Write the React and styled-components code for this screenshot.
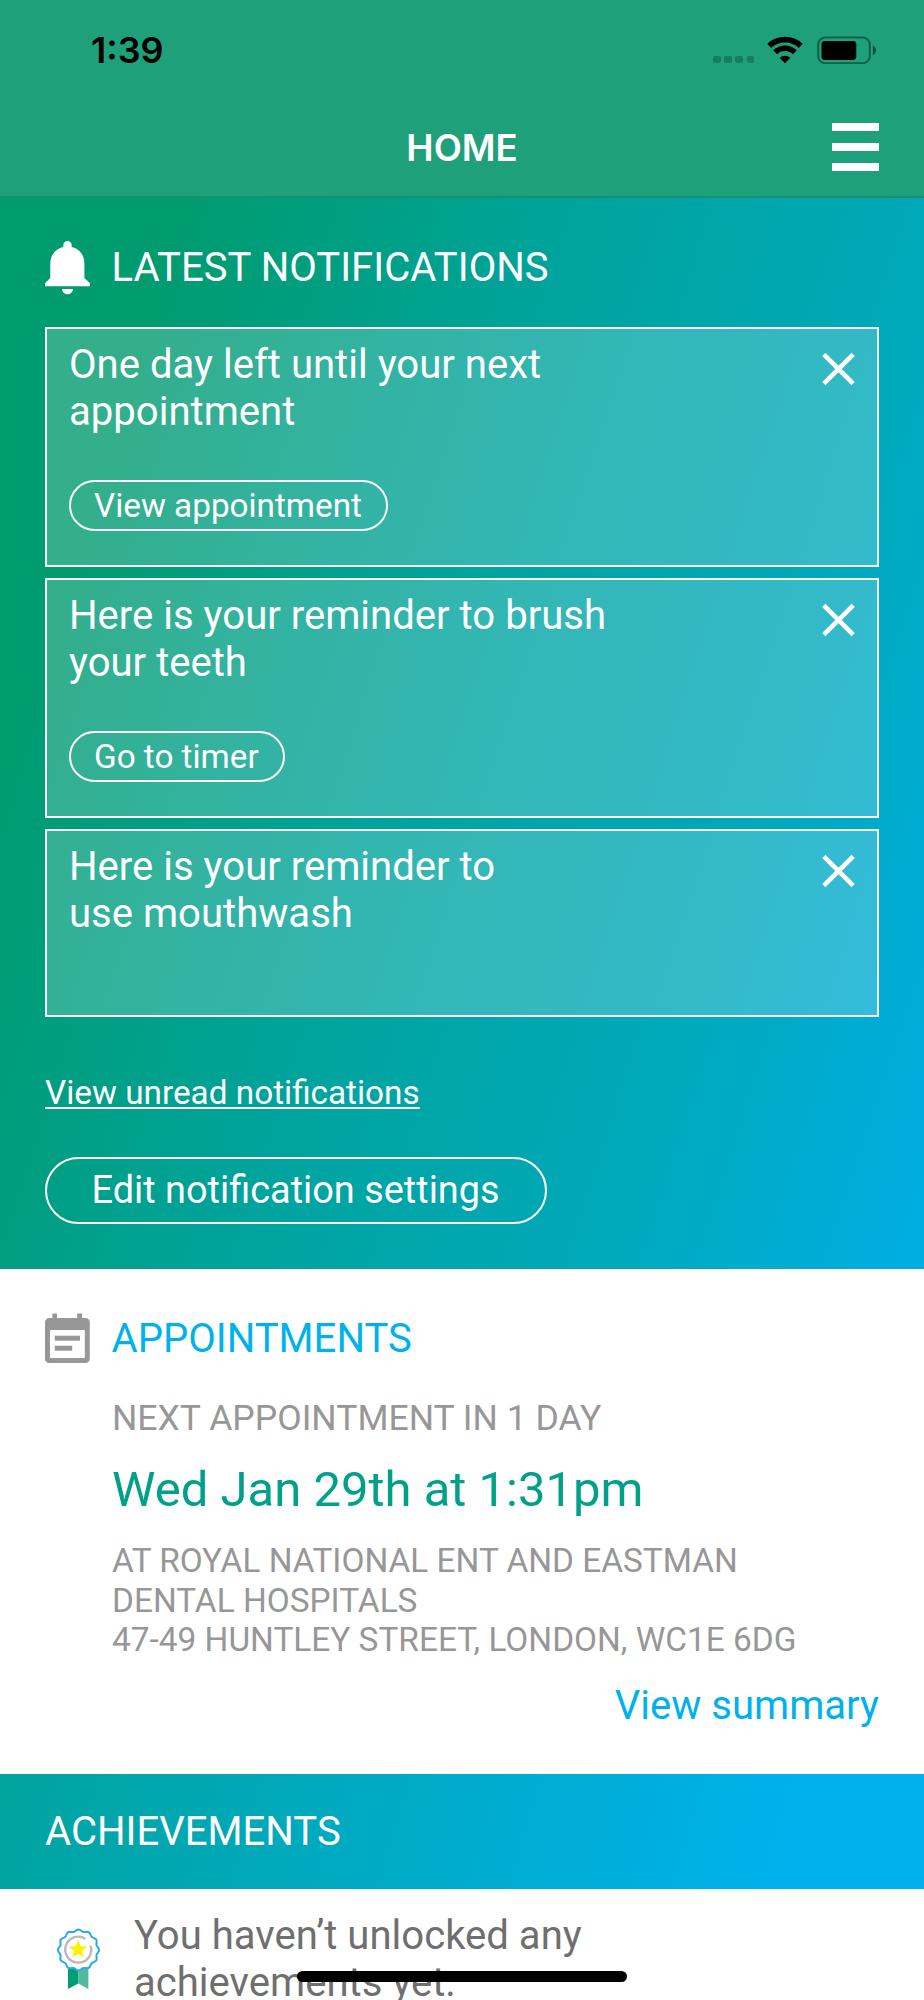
import React from 'react';
import styled, { createGlobalStyle } from 'styled-components';

const Colors = {
  header: '#1ea07b',
  green: '#009b6e',
  teal: '#00a49e',
  blue: '#00b1ee',
  title: '#00a188',
  grey: '#979797',
  text: '#6f6f6f',
};

const GlobalStyle = createGlobalStyle`
  * {
    box-sizing: border-box;
  }
  body {
    margin: 0;
    font-family: Roboto, sans-serif;
    background: #fff;
  }
`;

const Page = styled.div`
  position: relative;
  display: flex;
  flex-direction: column;
  width: 924px;
  height: 2000px;
  overflow: hidden;
  background: #fff;
`;

const Header = styled.header`
  flex: none;
  height: 198px;
  background: ${Colors.header};
  border-bottom: 2px solid #17906f;
`;

const StatusBar = styled.div`
  display: flex;
  justify-content: space-between;
  height: 100px;
  padding: 36px 47px 0 91px;
`;

const Time = styled.span`
  font: 600 36px/29px Inter, sans-serif;
  color: #000;
`;

const StatusIcons = styled.div`
  display: flex;
  height: 28px;
`;

const Dots = styled.div`
  display: flex;
  align-items: flex-end;
  gap: 3.6px;
  padding-bottom: 1px;
  margin-right: 13px;

  i {
    width: 7.5px;
    height: 7.5px;
    border-radius: 2px;
    background: rgba(0, 0, 0, 0.22);
  }
`;

const NavBar = styled.div`
  display: grid;
  grid-template-columns: 1fr auto 1fr;
  align-items: center;
  height: 94px;
  padding: 0 45px;
`;

const NavTitle = styled.h1`
  grid-column: 2;
  margin: 0;
  padding-top: 2px;
  font: 600 36.6px/46px Inter, sans-serif;
  color: #fff;
`;

const MenuButton = styled.div`
  justify-self: end;
  display: flex;
  flex-direction: column;
  gap: 12px;
  width: 47px;

  span {
    height: 8px;
    background: #fff;
  }
`;

const Notifications = styled.section`
  flex: none;
  display: flex;
  flex-direction: column;
  align-items: flex-start;
  height: 1071px;
  padding: 43px 45px 0;
  color: #fff;
  background: linear-gradient(
    108deg,
    ${Colors.green} 14%,
    ${Colors.teal} 47%,
    #00a9bb 75%,
    #00abca 84%,
    #00aee4 100%
  );
`;

const SectionHeader = styled.div`
  display: flex;
  height: 86px;

  svg {
    flex: none;
    margin-right: 21.5px;
  }
`;

const SectionTitle = styled.h2`
  margin: 0;
  padding-top: 3px;
  font-size: 40.1px;
  font-weight: 400;
  line-height: 48px;
  white-space: nowrap;
  color: ${(p) => p.color || '#fff'};
`;

const CardList = styled.div`
  display: flex;
  flex-direction: column;
  gap: 11px;
  width: 834px;
`;

const Card = styled.article`
  display: flex;
  justify-content: space-between;
  height: ${(p) => (p.$short ? 188 : 240)}px;
  padding: 11.5px 22.5px 0 22px;
  border: 2px solid #fff;
  background: rgba(255, 255, 255, 0.2);
  background-clip: padding-box;

  > svg {
    margin-top: 11px;
  }
`;

const Message = styled.p`
  margin: 0 0 45px;
  font-size: 40.1px;
  line-height: 47.2px;
  white-space: pre-line;
`;

const Pill = styled.button`
  display: block;
  height: ${(p) => (p.$large ? 67 : 51)}px;
  padding: ${(p) => (p.$large ? '0 45px 0 44.5px' : '0 24px 0 23px')};
  border: 2px solid #fff;
  border-radius: 34px;
  background: none;
  color: #fff;
  font-family: inherit;
  font-size: ${(p) => (p.$large ? 37.9 : 33.25)}px;
  line-height: ${(p) => (p.$large ? 63 : 48)}px;
  white-space: nowrap;
`;

const UnreadLink = styled.a`
  margin: 56px 0 44px;
  font-size: 33.3px;
  line-height: 40px;
  text-decoration: underline;
  text-decoration-thickness: 2.4px;
  text-decoration-skip-ink: none;
  text-underline-offset: 3px;
`;

const Appointments = styled.section`
  flex: none;
  display: flex;
  flex-direction: column;
  height: 505px;
  padding: 44px 45px 0;
  color: ${Colors.grey};

  ${SectionHeader} {
    height: 81px;
  }
  ${SectionTitle} {
    padding-top: 2px;
  }
`;

const Details = styled.div`
  padding-left: 67px;
`;

const NextLabel = styled.div`
  font-size: 35.55px;
  line-height: 48px;
`;

const DateText = styled.div`
  margin-top: 19px;
  font-size: 49px;
  line-height: 58px;
  color: ${Colors.title};
`;

const Address = styled.div`
  margin-top: 22px;
  font-size: 33.4px;
  line-height: 39.6px;
  white-space: pre-line;
`;

const SummaryLink = styled.a`
  align-self: flex-end;
  margin-top: 22px;
  font-size: 40.1px;
  line-height: 47px;
  color: ${Colors.blue};
`;

const AchievementsBar = styled.div`
  flex: none;
  height: 115px;
  padding: 31px 45px 0;
  background: linear-gradient(107deg, ${Colors.teal} 0%, ${Colors.blue} 86%);
`;

const Achievement = styled.div`
  display: flex;
  gap: 33px;
  padding: 23px 56px 0;

  svg {
    flex: none;
    margin-top: 16px;
  }
`;

const AchievementText = styled.p`
  margin: 0;
  font-size: 40.1px;
  line-height: 47px;
  color: ${Colors.text};
  white-space: pre-line;
`;

const HomeIndicator = styled.div`
  position: absolute;
  left: 297px;
  top: 1971px;
  width: 330px;
  height: 11px;
  border-radius: 6px;
  background: #000;
`;

const WifiIcon = () => (
  <svg width="36" height="28" viewBox="0 0 36 28" fill="none" stroke="#000">
    <path d="M2.2 9.9A23 23 0 0 1 33.8 9.9" strokeWidth="5.6" />
    <path d="M8.2 16.2A14 14 0 0 1 27.8 16.2" strokeWidth="5.6" />
    <path d="M18 27.3L12.6 21.8A8 8 0 0 1 23.4 21.8Z" fill="#000" stroke="none" />
  </svg>
);

const BatteryIcon = () => (
  <svg width="60" height="28" viewBox="0 0 60 28">
    <rect x="1.2" y="1.6" width="51.6" height="25.6" rx="7" fill="none" stroke="#000" strokeOpacity="0.42" strokeWidth="2" />
    <rect x="4.5" y="5" width="34.8" height="19" rx="3.4" fill="#000" />
    <path d="M55.8 9.6Q59 11.4 59 14.4T55.8 19.2Z" fill="#000" fillOpacity="0.5" />
  </svg>
);

const BellIcon = () => (
  <svg width="45" height="54" viewBox="0 0 45 54" fill="#fff">
    <path d="M18.3 5.9V4.2A4.1 4.1 0 0 1 26.7 4.2V5.9C34.5 7.8 39.4 13.8 39.4 22.6V37L45 42.3V45.3H0V42.3L5.3 37V22.6C5.3 13.8 10.5 7.8 18.3 5.9Z" />
    <path d="M17 48H28A5.5 5.2 0 0 1 17 48Z" />
  </svg>
);

const CalendarIcon = () => (
  <svg width="45" height="51" viewBox="0 0 45 51" fill={Colors.grey}>
    <path d="M7.4 0.5H12V5H32.2V0.5H37V5H40.5A4.2 4.2 0 0 1 44.8 9.2V45.8A4.2 4.2 0 0 1 40.5 50H4.3A4.2 4.2 0 0 1 0 45.8V9.2A4.2 4.2 0 0 1 4.3 5H7.4ZM5 17V45H39.8V17Z" fillRule="evenodd" />
    <rect x="9.8" y="22.7" width="25.2" height="5" />
    <rect x="9.8" y="32.7" width="17.4" height="5" />
  </svg>
);

const CloseIcon = () => (
  <svg width="33" height="34" viewBox="0 0 33 34" stroke="#fff" strokeWidth="4.6">
    <path d="M1.8 2.3L31.2 31.7M31.2 2.3L1.8 31.7" />
  </svg>
);

// wavy outline of the rosette
const rosette = () => {
  const points = [];
  for (let i = 0; i < 144; i++) {
    const a = (i / 144) * Math.PI * 2 - Math.PI / 2;
    const r = 19.6 + 0.9 * Math.cos(12 * a);
    points.push(`${(22.5 + r * Math.cos(a)).toFixed(2)},${(22 + r * Math.sin(a)).toFixed(2)}`);
  }
  return points.join(' ');
};

const AwardIcon = () => (
  <svg width="45" height="63" viewBox="0 0 45 63">
    <path d="M12 38H22.3V55.5L12 61Z" fill="#049c73" />
    <path d="M22.3 38H32.4V61L22.3 55.5Z" fill="#52b99c" />
    <polygon points={rosette()} fill="#fff" stroke="#2aabe8" strokeWidth="2" />
    <path d="M29.4 10.8A13 13 0 1 0 34.6 17.6" fill="none" stroke="#bababa" strokeWidth="2.4" />
    <path d="M22 11.6L24.5 18.3L31.2 18.6L26 22.9L27.8 29.6L22 25.8L16.2 29.6L18 22.9L12.8 18.6L19.5 18.3Z" fill="#fff000" />
  </svg>
);

const notifications = [
  { text: 'One day left until your next\nappointment', action: 'View appointment' },
  { text: 'Here is your reminder to brush\nyour teeth', action: 'Go to timer' },
  { text: 'Here is your reminder to\nuse mouthwash' },
];

const Notification = (p) => {
  return (
    <Card $short={!p.action}>
      <div>
        <Message>{p.text}</Message>
        {p.action && <Pill>{p.action}</Pill>}
      </div>
      <CloseIcon />
    </Card>
  );
};

const App = () => {
  return (
    <Page>
      <GlobalStyle />
      <Header>
        <StatusBar>
          <Time>1:39</Time>
          <StatusIcons>
            <Dots><i /><i /><i /><i /></Dots>
            <WifiIcon />
            <span style={{ width: 14 }} />
            <BatteryIcon />
          </StatusIcons>
        </StatusBar>
        <NavBar>
          <NavTitle>HOME</NavTitle>
          <MenuButton><span /><span /><span /></MenuButton>
        </NavBar>
      </Header>

      <Notifications>
        <SectionHeader>
          <BellIcon />
          <SectionTitle>LATEST NOTIFICATIONS</SectionTitle>
        </SectionHeader>
        <CardList>
          {notifications.map((n) => <Notification key={n.text} {...n} />)}
        </CardList>
        <UnreadLink>View unread notifications</UnreadLink>
        <Pill $large>Edit notification settings</Pill>
      </Notifications>

      <Appointments>
        <SectionHeader>
          <CalendarIcon />
          <SectionTitle color={Colors.blue}>APPOINTMENTS</SectionTitle>
        </SectionHeader>
        <Details>
          <NextLabel>NEXT APPOINTMENT IN 1 DAY</NextLabel>
          <DateText>Wed Jan 29th at 1:31pm</DateText>
          <Address>
            {'AT ROYAL NATIONAL ENT AND EASTMAN\nDENTAL HOSPITALS\n47-49 HUNTLEY STREET, LONDON, WC1E 6DG'}
          </Address>
        </Details>
        <SummaryLink>View summary</SummaryLink>
      </Appointments>

      <AchievementsBar>
        <SectionTitle>ACHIEVEMENTS</SectionTitle>
      </AchievementsBar>
      <Achievement>
        <AwardIcon />
        <AchievementText>{'You haven’t unlocked any\nachievements yet.'}</AchievementText>
      </Achievement>
      <HomeIndicator />
    </Page>
  );
};

export default App;
